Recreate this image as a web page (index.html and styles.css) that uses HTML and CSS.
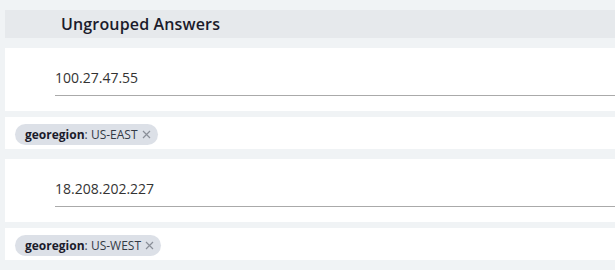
FILE: index.html
```html
<!DOCTYPE html>
<html lang="en">
<head>
    <meta charset="UTF-8">
    <title>Ungrouped Answers</title>
    <link rel="stylesheet" href="styles.css">
</head>
<body>
    <div id="answers">
        <div class="group-header">Ungrouped Answers</div>

        <div class="answer">
            <div class="answer-field">100.27.47.55</div>
        </div>
        <div class="tag-row">
            <span class="tag"><b>georegion</b>: US-EAST
                <svg class="tag-close" width="9" height="9" viewBox="0 0 9 9"><path d="M1 1L8 8M8 1L1 8"/></svg>
            </span>
        </div>

        <div class="answer">
            <div class="answer-field">18.208.202.227</div>
        </div>
        <div class="tag-row">
            <span class="tag"><b>georegion</b>: US-WEST
                <svg class="tag-close" width="9" height="9" viewBox="0 0 9 9"><path d="M1 1L8 8M8 1L1 8"/></svg>
            </span>
        </div>
    </div>
</body>
</html>
```

FILE: styles.css
```css
*{
    padding: 0;
    margin: 0;
    box-sizing: border-box;
}
body{
    background-color: #f0f3f5;
    font-family: "Open Sans", "Liberation Sans", sans-serif;
}
#answers{
    padding: 10px 0 0 5px;
}
.group-header{
    height: 28px;
    line-height: 28px;
    padding-left: 56px;
    background-color: #e6e9ec;
    font-size: 16px;
    font-weight: 600;
    letter-spacing: 0.15px;
    color: #1b1b2b;
    margin-bottom: 10px;
}
.answer{
    background-color: #fff;
    padding: 20px 0 15px 50px;
    margin-bottom: 6px;
}
.answer-field{
    line-height: 20px;
    padding-bottom: 7px;
    border-bottom: 1px solid #aaa;
    font-size: 14px;
    color: #333;
}
.tag-row{
    background-color: #fff;
    height: 32px;
    padding: 5px 10px;
    margin-bottom: 10px;
}
.tag{
    display: inline-flex;
    align-items: center;
    height: 21px;
    padding: 0 7px 0 10px;
    border-radius: 11px;
    background-color: #dce0e7;
    font-size: 12px;
    color: #333a45;
}
.tag b{
    font-weight: 700;
    color: #1b1b2b;
}
.tag-close{
    margin-left: 4px;
    stroke: #8a8f98;
    stroke-width: 1.2;
    fill: none;
}
```
